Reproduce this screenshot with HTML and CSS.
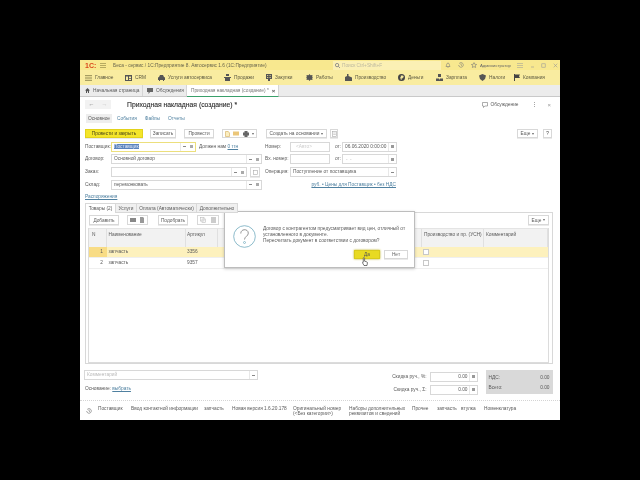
FILE: index.html
```html
<!DOCTYPE html>
<html>
<head>
  <meta charset="utf-8">
  <title>Приходная накладная (создание)</title>
  <link rel="stylesheet" href="styles.css">
</head>
<body>
  <div class="app">
    <!-- заголовок окна -->
    <div class="titlebar">
      <span class="logo">1С:</span>
      <svg class="burger" width="6" height="5" viewBox="0 0 6 5"><path d="M0 .5h6M0 2.5h6M0 4.5h6" stroke="#9a8f4a" stroke-width=".7"/></svg>
      <span class="apptitle">Беса - сервис / 1С:Предприятие 8. Автосервис 1.6 (1С:Предприятие)</span>
      <div class="search">
        <svg width="5" height="5" viewBox="0 0 6 6"><circle cx="2.5" cy="2.5" r="2" fill="none" stroke="#667" stroke-width=".8"/><path d="M4 4l2 2" stroke="#667" stroke-width=".8"/></svg>
        <span>Поиск Ctrl+Shift+F</span>
      </div>
      <div class="sysicons">
        <svg width="6" height="6" viewBox="0 0 6 6"><path d="M1 4.500C1.600 4 1.400 1 3 1s1.400 3 2 3.500zM2.500 5.400h1" fill="none" stroke="#777" stroke-width=".6"/></svg>
        <svg width="6" height="6" viewBox="0 0 6 6"><path d="M1.200 1.500A2.300 2.300 0 1 1 .7 3M3 1.600V3l1 .7" fill="none" stroke="#777" stroke-width=".6"/></svg>
        <svg width="6" height="6" viewBox="0 0 6 6"><path d="M3 .6l.8 1.700 1.800.2-1.300 1.200.3 1.800L3 4.600l-1.600.9.3-1.800L.4 2.500l1.800-.2z" fill="none" stroke="#777" stroke-width=".6"/></svg>
      </div>
      <span class="user">Администратор</span>
      <div class="winbtns">
        <svg width="6" height="5" viewBox="0 0 6 5"><path d="M0 .5h6M0 2.500h6M0 4.500h6" stroke="#999" stroke-width=".5"/></svg>
        <svg width="5" height="5" viewBox="0 0 5 5"><path d="M1 4h3" stroke="#999" stroke-width=".6"/></svg>
        <svg width="5" height="5" viewBox="0 0 5 5"><rect x=".8" y=".8" width="3.400" height="3.400" fill="none" stroke="#999" stroke-width=".6"/></svg>
        <svg width="5" height="5" viewBox="0 0 5 5"><path d="M.7.7l3.600 3.600M4.300.7L.7 4.300" stroke="#999" stroke-width=".6"/></svg>
      </div>
    </div>

    <!-- разделы -->
    <nav class="sections">
      <div class="sec"><svg width="7" height="6" viewBox="0 0 7 6"><path d="M0 .7h7M0 3h7M0 5.300h7" stroke="#77713f" stroke-width=".8"/></svg><span>Главное</span></div>
      <div class="sec"><svg width="7" height="7" viewBox="0 0 7 7"><path d="M0 1h7v6H0zM1 2.500v3.500h2V2.500zM4 2.500V4h2V2.500zM4 4.800V6h2V4.800z" fill="#555" fill-rule="evenodd"/></svg><span>CRM</span></div>
      <div class="sec"><svg width="7" height="6" viewBox="0 0 7 6"><path d="M1 2l1-2h3l1 2 1 .5V5H6v1H5V5H2v1H1V5H0V2.500z" fill="#555"/></svg><span>Услуги автосервиса</span></div>
      <div class="sec"><svg width="7" height="7" viewBox="0 0 7 7"><path d="M2 0h3v2H2zM0 3h7v1H0zM1 4h5v3H1z" fill="#555"/></svg><span>Продажи</span></div>
      <div class="sec"><svg width="6" height="7" viewBox="0 0 6 7"><path d="M0 0h6v5H4v2H2V5H0zM1.200 1v1h1V1zM3.600 1v1h1V1zM1.200 3v1h1V3zM3.600 3v1h1V3z" fill="#555" fill-rule="evenodd"/></svg><span>Закупки</span></div>
      <div class="sec"><svg width="7" height="7" viewBox="0 0 7 7"><path d="M3.500 0l1 1.300L6.500 1l-.3 2L7 3.500 6.200 4l.3 2-2-.3-1 1.300-1-1.300-2 .3.300-2L0 3.500.8 3 .5 1l2 .3z" fill="#555"/></svg><span>Работы</span></div>
      <div class="sec"><svg width="7" height="7" viewBox="0 0 7 7"><path d="M0 7V3l2-1V0h1.500v2L7 3.500V7z" fill="#555"/></svg><span>Производство</span></div>
      <div class="sec"><svg width="7" height="7" viewBox="0 0 7 7"><path d="M3.500 0a3.500 3.500 0 1 0 0 7 3.500 3.500 0 0 0 0-7zM2.800 1.600h1.700a1.100 1.100 0 0 1 0 2.300h-1v.6h1v.6h-1v.8h-.7v-.8h-.6v-.6h.6v-.6h-.6v-.6h.6z" fill="#444" fill-rule="evenodd"/></svg><span>Деньги</span></div>
      <div class="sec"><svg width="7" height="7" viewBox="0 0 7 7"><path d="M2 0h3v3H2zM0 7V4.500h3L3.500 6 4 4.500h3V7z" fill="#555"/></svg><span>Зарплата</span></div>
      <div class="sec"><svg width="7" height="7" viewBox="0 0 7 7"><path d="M3.500 0L7 1.500 6 5 3.500 7 1 5 0 1.500z" fill="#555"/></svg><span>Налоги</span></div>
      <div class="sec"><svg width="6" height="7" viewBox="0 0 6 7"><path d="M0 0h1v7H0zM1 .5h5l-1 1.800 1 1.800H1z" fill="#444"/></svg><span>Компания</span></div>
    </nav>

    <!-- открытые вкладки -->
    <div class="opentabs">
      <div class="otab home">
        <svg width="5" height="5" viewBox="0 0 5 5"><path d="M2.500 0L5 2.500H4V5H3V3.200H2V5H1V2.500H0z" fill="#555"/></svg>
        <span>Начальная страница</span>
      </div>
      <div class="otab disc">
        <svg width="6" height="6" viewBox="0 0 6 6"><path d="M0 0h6v4H3L1.500 6V4H0z" fill="#666"/></svg>
        <span>Обсуждения</span>
      </div>
      <div class="otab current">
        <span>Приходная накладная (создание) *</span>
        <b>×</b>
      </div>
    </div>

    <main class="doc">
      <div class="dochead">
        <div class="navbtns"><span>←</span><span class="off">→</span></div>
        <h1>Приходная накладная (создание) *</h1>
        <div class="headright">
          <svg width="6" height="6" viewBox="0 0 6 6"><path d="M.5.500h5v3.500H2.800L1.500 5.500V4H.5z" fill="none" stroke="#777" stroke-width=".6"/></svg>
          <span>Обсуждение</span>
          <b class="dots">⋮</b>
          <b class="closex">×</b>
        </div>
      </div>

      <div class="subnav">
        <span class="picked">Основное</span>
        <a>События</a>
        <a>Файлы</a>
        <a>Отчеты</a>
      </div>

      <div class="toolbar">
        <button class="btn primary">Провести и закрыть</button>
        <button class="btn w26">Записать</button>
        <button class="btn w30">Провести</button>
        <div class="btngroup">
          <svg width="5" height="6" viewBox="0 0 5 6"><path d="M.5.500h2.800L4.500 2v3.500h-4z" fill="#fbeec0" stroke="#d4ab58" stroke-width=".6"/></svg>
          <svg width="6" height="5" viewBox="0 0 6 5"><path d="M0 .5h6v4H0z" fill="#ebc679"/></svg>
          <svg width="6" height="6" viewBox="0 0 6 6"><path d="M1.500 0h3v1.500h1.500V4.500H4.500V6h-3V4.500H0V1.500h1.500z" fill="#666"/></svg>
          <i class="caret"></i>
        </div>
        <button class="btn create">Создать на основании <i class="caret"></i></button>
        <button class="btn icononly">
          <svg width="5" height="6" viewBox="0 0 5 6"><rect x=".4" y=".4" width="4.200" height="5.200" fill="none" stroke="#aaa" stroke-width=".6"/><path d="M1.200 2h2.600M1.200 3.500h2.600" stroke="#aaa" stroke-width=".5"/></svg>
        </button>
        <button class="btn more">Еще <i class="caret"></i></button>
        <button class="btn help">?</button>
      </div>

      <div class="form">
        <label>Поставщик:</label>
        <div class="cellrow">
          <div class="field focus w85"><span class="sel">Поставщик</span><em class="drop"></em><em class="open"></em></div>
          <a class="debt">Должен нам <u>0 тгн</u></a>
        </div>
        <span></span>
        <label>Номер:</label>
        <div class="field"><span class="auto">&lt;Авто&gt;</span></div>
        <label class="from">от:</label>
        <div class="field"><span>06.06.2020 0:00:00</span><em class="cal"></em></div>

        <label>Договор:</label>
        <div class="field"><span>Основной договор</span><em class="drop"></em><em class="open"></em></div>
        <span></span>
        <label>Вх. номер:</label>
        <div class="field"></div>
        <label class="from">от:</label>
        <div class="field"><span>&nbsp;.&nbsp;&nbsp;.</span><em class="cal"></em></div>

        <label>Заказ:</label>
        <div class="cellrow">
          <div class="field w135"><em class="drop"></em><em class="open"></em></div>
          <button class="btn square">
            <svg width="5" height="5" viewBox="0 0 5 5"><rect x=".4" y=".4" width="4.200" height="4.200" fill="none" stroke="#aaa" stroke-width=".6"/></svg>
          </button>
        </div>
        <span></span>
        <label>Операция:</label>
        <div class="field span3"><span>Поступление от поставщика</span><em class="drop"></em></div>

        <label>Склад:</label>
        <div class="field"><span>перемонковать</span><em class="drop"></em><em class="open"></em></div>
        <span></span>
        <a class="prices">руб. • Цены для Поставщик • без НДС</a>
      </div>

      <a class="orders">Распоряжения</a>

      <div class="pagetabs">
        <span class="ptab active">Товары (2)</span>
        <span class="ptab t20">Услуги</span>
        <span class="ptab t59">Оплата (Автоматически)</span>
        <span class="ptab t41">Дополнительно</span>
      </div>

      <section class="panel">
        <div class="tabletools">
          <button class="btn add">Добавить</button>
          <div class="btngroup g21">
            <svg width="6" height="6" viewBox="0 0 6 6"><path d="M0 1h6v4H0z" fill="#888"/></svg>
            <svg width="6" height="6" viewBox="0 0 6 6"><path d="M1 0h3l1 1v5H1z" fill="#999"/></svg>
          </div>
          <button class="btn pick">Подобрать</button>
          <div class="btngroup g22">
            <svg width="6" height="6" viewBox="0 0 6 6"><rect x=".5" y=".5" width="3.500" height="3.500" fill="none" stroke="#bbb" stroke-width=".6"/><rect x="2" y="2" width="3.500" height="3.500" fill="none" stroke="#bbb" stroke-width=".6"/></svg>
            <svg width="5" height="6" viewBox="0 0 5 6"><path d="M0 0h5v6H0z" fill="#ccc"/></svg>
          </div>
          <button class="btn more">Еще <i class="caret"></i></button>
        </div>

        <div class="grid">
          <div class="ghead">
            <span class="c-n">N</span>
            <span class="c-name">Наименование</span>
            <span class="c-art">Артикул</span>
            <span class="c-mid"></span>
            <span class="c-usn">Производство и пр. (УСН)</span>
            <span class="c-note">Комментарий</span>
          </div>
          <div class="grow current">
            <span class="c-n">1</span>
            <span class="c-name">запчасть</span>
            <span class="c-art">3356</span>
            <span class="c-mid"></span>
            <span class="c-usn"><i class="check"></i></span>
            <span class="c-note"></span>
          </div>
          <div class="grow">
            <span class="c-n">2</span>
            <span class="c-name">запчасть</span>
            <span class="c-art">9357</span>
            <span class="c-mid"></span>
            <span class="c-usn"><i class="check"></i></span>
            <span class="c-note"></span>
          </div>
        </div>
      </section>

      <div class="bottom">
        <div class="bottomleft">
          <div class="field comment"><span>Комментарий</span><em class="drop"></em></div>
          <p class="basis">Основание: <a>выбрать</a></p>
        </div>
        <div class="discounts">
          <div class="disc-row"><label>Скидка руч., %:</label><div class="field num"><span>0.00</span><em class="cal"></em></div></div>
          <div class="disc-row"><label>Скидка руч., Σ:</label><div class="field num"><span>0.00</span><em class="cal"></em></div></div>
        </div>
        <div class="totals">
          <div><span>НДС:</span><span>0.00</span></div>
          <div><span>Всего:</span><span>0.00</span></div>
        </div>
      </div>
    </main>

    <footer class="history">
      <svg width="6" height="6" viewBox="0 0 6 6"><path d="M1.200 1.500A2.300 2.300 0 1 1 .7 3M3 1.600V3l1 .7" fill="none" stroke="#666" stroke-width=".6"/></svg>
      <a class="h1">Поставщик</a>
      <a class="h2">Ввод контактной информации</a>
      <a class="h3">запчасть</a>
      <a class="h4">Новая версия 1.6.20.178</a>
      <a class="h5">Оригинальный номер (&lt;Без категории&gt;)</a>
      <a class="h6">Наборы дополнительных реквизитов и сведений</a>
      <a class="h7">Прочее</a>
      <a class="h8">запчасть</a>
      <a class="h9">втулка</a>
      <a>Номенклатура</a>
    </footer>

    <!-- вопрос поверх формы -->
    <div class="dialog">
      <svg class="qmark" width="23" height="23" viewBox="0 0 23 23">
        <circle cx="11.500" cy="11.500" r="10.800" fill="none" stroke="#5d9fb5" stroke-width=".7"/>
        <path d="M7.800 8.500c0-5 7.500-5 7.500-.3 0 3-3.800 3.300-3.800 6.300" fill="none" stroke="#777" stroke-width=".8"/>
        <circle cx="11.500" cy="17.500" r="1" fill="none" stroke="#5d9fb5" stroke-width=".6"/>
      </svg>
      <div class="dlgbody">
        <p>Договор с контрагентом предусматривает вид цен, отличный от<br>установленного в документе.<br>Пересчитать документ в соответствии с договором?</p>
        <div class="dlgbtns">
          <button class="btn yes">Да</button>
          <button class="btn no">Нет</button>
        </div>
      </div>
    </div>
    <svg class="pointer" width="6" height="11" viewBox="0 0 6 11"><path d="M1.800.5c.7 0 .8.500.8 1V4.200l2 .6c.7.2.9.600.8 1.200L5 8.500H2L.5 5.800c-.3-.6.200-1 .8-.6V1.500c0-.5 0-1 .5-1z" fill="#fff" stroke="#222" stroke-width=".6"/></svg>
  </div>
</body>
</html>
```

FILE: styles.css
```css
html, body {
  margin: 0;
  height: 100%;
  background: #000;
}
body {
  font-family: "Liberation Sans", Arial, sans-serif;
  font-size: 4.800px;
  color: #5a5a5a;
}
a { color: #4f80a0; }
em, i { display: block; font-style: normal; }
label { white-space: nowrap; }
button { font-family: inherit; font-size: inherit; color: inherit; margin: 0; padding: 0; }
h1, p { margin: 0; font-weight: normal; }

.app {
  position: relative;
  width: 480px;
  height: 360px;
  margin: 60px 0 0 80px;
  background: #fff;
  display: flex;
  flex-direction: column;
  overflow: hidden;
  filter: blur(.3px);
}

/* заголовок */
.titlebar {
  height: 10px;
  flex: none;
  display: flex;
  align-items: center;
  background: #f8e88f;
  padding-left: 5px;
}
.logo { width: 15px; color: #d9481c; font-size: 7px; font-weight: bold; }
.burger { margin-right: 7px; }
.apptitle { width: 220px; white-space: nowrap; color: #66634c; }
.search {
  width: 108px;
  height: 9px;
  display: flex;
  align-items: center;
  gap: 2px;
  padding-left: 2px;
  box-sizing: border-box;
  background: #fbf0b4;
  color: #bdb8a0;
}
.sysicons { width: 39px; padding-left: 4px; box-sizing: border-box; display: flex; gap: 7px; }
.user { width: 37px; color: #666; white-space: nowrap; font-size: 4.300px; }
.winbtns { display: flex; gap: 6.500px; }

.sections {
  height: 15px;
  flex: none;
  display: grid;
  grid-template-columns: 40px 33px 66px 42px 40px 39px 53px 38px 43px 35px 42px;
  align-items: center;
  padding-left: 5px;
  background: #f9eca0;
  color: #5c5940;
}
.sec { display: flex; align-items: center; gap: 3px; white-space: nowrap; }

.opentabs {
  height: 11px;
  flex: none;
  display: flex;
  background: #ececec;
  border-bottom: 1px solid #c9c9c9;
  box-sizing: content-box;
}
.otab { display: flex; align-items: center; gap: 3px; white-space: nowrap; border-right: 1px solid #d5d5d5; box-sizing: border-box; }
.otab.home { width: 63px; padding-left: 5px; }
.otab.disc { width: 44px; padding-left: 4px; }
.otab.current {
  width: 92px;
  padding-left: 4px;
  justify-content: space-between;
  padding-right: 3px;
  background: #fff;
  border-bottom: 1px solid #3aa06a;
  height: 12px;
  color: #777;
}
.otab.current b { font-size: 6px; color: #555; }

.doc {
  flex: 1;
  min-height: 0;
  display: flex;
  flex-direction: column;
  padding: 3px 7px 0 5px;
}
.dochead { height: 9px; display: flex; align-items: center; flex: none; }
.navbtns { display: flex; width: 42px; color: #777; }
.navbtns span { width: 13px; height: 9px; line-height: 9px; text-align: center; background: #f2f2f2; font-size: 6px; }
.navbtns .off { color: #c4c4c4; }
h1 { font-size: 6.800px; color: #2a2a2a; flex: 1; -webkit-text-stroke: .1px #2a2a2a; }
.headright { display: flex; align-items: center; gap: 3px; padding-right: 2px; }
.dots { margin-left: 11px; font-weight: normal; }
.closex { margin-left: 7px; font-weight: normal; font-size: 6px; color: #999; }

.subnav { height: 9px; margin-top: 5px; display: flex; align-items: center; gap: 8px; flex: none; }
.subnav .picked { background: #eee; width: 26px; box-sizing: border-box; text-align: center; line-height: 9px; margin: 0 -3px 0 1px; }

.toolbar { height: 9px; margin-top: 6px; display: flex; align-items: stretch; flex: none; }
.btn {
  background: #fff;
  border: 1px solid #d8d8d8;
  box-shadow: 0 1px 0 #eaeaea;
  box-sizing: border-box;
  white-space: nowrap;
  display: flex;
  align-items: center;
  justify-content: center;
  gap: 2px;
}
.btn.primary { width: 58px; background: #f4e52a; border-color: #e2d21c; color: #46431a; margin-right: 7px; }
.btn.w26 { width: 26px; margin-right: 8px; }
.btn.w30 { width: 30px; margin-right: 8px; }
.btngroup {
  width: 35px;
  display: flex;
  align-items: center;
  justify-content: space-around;
  border: 1px solid #d8d8d8;
  box-sizing: border-box;
  margin-right: 9px;
}
.btn.create { width: 61px; margin-right: 3px; }
.btn.icononly { width: 8px; margin-right: auto; }
.btn.more { width: 21px; }
.btn.help { width: 9px; margin-left: 5px; margin-right: 1px; color: #333; }
.caret { width: 0; height: 0; border: 1.500px solid transparent; border-top: 2px solid #666; border-bottom: 0; }

.form {
  margin-top: 3.500px;
  display: grid;
  grid-template-columns: 26px 151px 3px 25px 40px 12px 55px;
  grid-auto-rows: 10px;
  row-gap: 2.750px;
  align-items: center;
  flex: none;
}
.form > label { line-height: 10px; }
.form .from { padding-left: 5px; }
.field {
  position: relative;
  height: 10px;
  line-height: 8.500px;
  border: 1px solid #d8d8d8;
  box-sizing: border-box;
  padding-left: 2px;
  white-space: nowrap;
  background: #fff;
  overflow: hidden;
}
.field.focus { border-color: #ecdf7c; }
.field.w85 { width: 85px; flex: none; }
.field.w135 { width: 136px; flex: none; }
.field.span3 { grid-column: span 3; }
.sel { background: #5a83bd; color: #dfe7f5; }
.auto { color: #ccc; padding-left: 3px; }
.cellrow { display: flex; align-items: center; gap: 3px; }
.debt { color: #5a5a5a; }
.debt u { color: #4f80a0; }
.btn.square { width: 10px; height: 10px; }

/* кнопки внутри полей */
.drop, .open, .cal {
  position: absolute;
  top: 0;
  bottom: 0;
  width: 7px;
  border-left: 1px solid #e8e8e8;
  background-repeat: no-repeat;
  background-position: center;
}
.drop { right: 7px; background-image: linear-gradient(#888, #888); background-size: 3px 1px; }
.open { right: 0; border-left: 0; background-image: linear-gradient(#aaa, #aaa); background-size: 3px 3px; }
.field.span3 .drop, .comment .drop { right: 0; }
.cal { right: 0; background-image: linear-gradient(#999, #999); background-size: 3px 3px; }

.prices {
  grid-column: 4 / span 4;
  text-align: right;
  text-decoration: underline;
  padding-right: 1px;
  white-space: nowrap;
}
.orders { margin-top: 3px; height: 8px; line-height: 8px; text-decoration: underline; width: 32px; white-space: nowrap; flex: none; }

.pagetabs { height: 10px; margin-top: 2.500px; display: flex; flex: none; position: relative; z-index: 1; }
.ptab {
  line-height: 10px;
  text-align: center;
  background: #f0f0f0;
  border: 1px solid #d8d8d8;
  border-left: 0;
  box-sizing: border-box;
  white-space: nowrap;
}
.ptab.active { width: 31px; background: #fff; border-left: 1px solid #d8d8d8; border-bottom: 0; }
.ptab.t20 { width: 21px; }
.ptab.t59 { width: 60px; }
.ptab.t41 { width: 41px; }

.panel {
  height: 152px;
  flex: none;
  margin-top: -1px;
  border: 1px solid #d8d8d8;
  box-sizing: border-box;
  padding: 2px 3px 0 2px;
  display: flex;
  flex-direction: column;
}
.tabletools { height: 9.500px; display: flex; align-items: stretch; flex: none; }
.tabletools .add { width: 30px; margin: 0 8px 0 1px; }
.btngroup.g21 { width: 21px; margin-right: 10px; }
.tabletools .pick { width: 30px; margin-right: 9px; }
.btngroup.g22 { width: 22px; margin-right: auto; }
.grid { flex: 1; margin-top: 3px; border: 1px solid #dcdcdc; border-top: 0; }
.ghead, .grow { display: flex; white-space: nowrap; }
.ghead { height: 19px; background: #f2f2f2; border-top: 1px solid #e4e4e4; box-sizing: border-box; }
.ghead span { padding-top: 3px; border-right: 1px solid #e0e0e0; }
.grow { height: 11px; line-height: 10px; border-bottom: 1px solid #efefef; box-sizing: border-box; }
.grow.current { background: #fdf1bd; }
.grow.current .c-n { background: #f8dc85; }
.c-n { width: 18px; box-sizing: border-box; padding-left: 3px; flex: none; }
.grow .c-n { text-align: right; padding-right: 4px; padding-left: 0; }
.c-name { width: 79px; box-sizing: border-box; padding-left: 1.500px; flex: none; }
.c-art { width: 32px; box-sizing: border-box; padding-left: 1px; flex: none; }
.c-mid { width: 203px; flex: none; }
.c-usn { width: 62px; box-sizing: border-box; padding-left: 2px; flex: none; }
.grow .c-usn { padding-left: 2px; padding-top: 2px; }
.c-note { flex: 1; padding-left: 2px; }
.check { width: 6px; height: 6px; border: 1px solid #c8c8c8; background: #fff; box-sizing: border-box; }

.bottom { margin-top: 6px; display: flex; flex: none; }
.bottomleft { width: 301px; flex: none; }
.field.comment { width: 174px; margin-left: -1px; color: #bbb; }
.basis { margin-top: 5px; line-height: 8px; }
.basis a { text-decoration: underline; }
.discounts { width: 92px; flex: none; display: flex; flex-direction: column; gap: 3px; margin: 1.500px 8px 0 -.5px; }
.disc-row { display: flex; align-items: center; justify-content: flex-end; gap: 3px; height: 10px; }
.field.num { width: 48px; flex: none; text-align: right; padding-right: 9px; }
.totals {
  width: 67px;
  height: 24px;
  background: #d9d9d9;
  padding: 2px 3px;
  box-sizing: border-box;
  display: flex;
  flex-direction: column;
  justify-content: space-around;
}
.totals div { display: flex; justify-content: space-between; }

.history {
  position: relative;
  height: 20px;
  flex: none;
  box-sizing: border-box;
  border-top: 1px dotted #d4d4d4;
  display: flex;
  align-items: flex-start;
  padding: 5px 0 0 6px;
  line-height: 5.300px;
  color: #5a5a5a;
}
.history svg { margin: 2px 6px 0 0; flex: none; }
.history a { color: inherit; white-space: nowrap; }
.h1 { width: 33px; }
.h2 { width: 73px; }
.h3 { width: 28px; }
.h4 { width: 61px; }
.history .h5 { width: 56px; white-space: normal; }
.history .h6 { width: 63px; white-space: normal; }
.h7 { width: 25px; }
.h8 { width: 24px; }
.h9 { width: 23px; }

/* диалог */
.dialog {
  position: absolute;
  left: 144px;
  top: 151px;
  width: 191px;
  height: 57px;
  box-sizing: border-box;
  background: #fff;
  border: 1px solid #bdbdbd;
  box-shadow: 0 1px 3px rgba(0,0,0,.2);
  display: flex;
  padding: 13px 6px 0 8px;
  gap: 7px;
}
.qmark { flex: none; }
.dlgbody { flex: 1; display: flex; flex-direction: column; }
.dlgbody p { line-height: 6px; white-space: nowrap; margin-top: 1px; }
.dlgbtns { display: flex; justify-content: flex-end; gap: 4px; margin-top: 6px; height: 9px; }
.btn.yes { width: 26px; background: #e8da22; border-color: #d8ca1c; box-shadow: 0 0 2px #b8ac10; color: #555; }
.btn.no { width: 24px; color: #666; }
.pointer { position: absolute; left: 282px; top: 197px; }
```
